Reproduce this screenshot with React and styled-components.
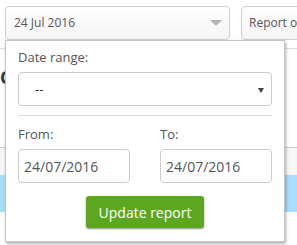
import React from "react";
import styled, { createGlobalStyle } from "styled-components";

const GlobalStyle = createGlobalStyle`
  html, body { margin: 0; padding: 0; background: #fff; }
  body { font-family: "Open Sans", "Liberation Sans", sans-serif; }
  * { box-sizing: border-box; }
`;

const Page = styled.div`
  position: relative;
  width: 297px;
  height: 245px;
  overflow: hidden;
  background: #fff;
`;

const Toolbar = styled.div`
  display: flex;
  gap: 11px;
  height: 49px;
  padding: 6px 0 0 5px;
  border-bottom: 1px solid #dcdcdc;
  white-space: nowrap;
`;

const ToolButton = styled.div`
  position: relative;
  flex: none;
  width: ${(p) => p.$width}px;
  height: 34px;
  padding-left: ${(p) => p.$pad}px;
  display: flex;
  align-items: center;
  border: 1px solid #cfcfcf;
  border-radius: 4px;
  background: linear-gradient(#ffffff, #f4f4f4);
  color: #555;
  font-size: 12px;
  line-height: 16px;
`;

const GrayCaret = styled.span`
  position: absolute;
  right: 7px;
  top: 13px;
  width: 0;
  height: 0;
  border-left: 6px solid transparent;
  border-right: 6px solid transparent;
  border-top: 6px solid #b4b4b4;
`;

const Content = styled.div`
  padding-top: 16px;
`;

const Heading = styled.h2`
  margin: 0 0 58px;
  font-size: 18px;
  line-height: 24px;
  font-weight: 700;
  color: #333;
  white-space: nowrap;
`;

const Row = styled.div`
  height: ${(p) => p.$h}px;
  background: ${(p) => p.$bg};
  border-top: ${(p) => (p.$line ? "1px solid #d0d0d0" : "none")};
`;

const Popup = styled.div`
  position: absolute;
  left: 5px;
  top: 40px;
  width: 280px;
  padding: 7px 12px 13px;
  background: #fff;
  border: 1px solid #c4c4c4;
  box-shadow: 1px 2px 3px rgba(0, 0, 0, 0.3);
`;

const Label = styled.div`
  font-size: 13px;
  line-height: 18px;
  color: #555;
  margin-bottom: 6px;
`;

const SelectBox = styled.div`
  position: relative;
  height: 34px;
  padding-left: 16px;
  display: flex;
  align-items: center;
  border: 1px solid #cccccc;
  border-radius: 4px;
  font-size: 13px;
  color: #333;
`;

const DarkCaret = styled.span`
  position: absolute;
  right: 7px;
  top: 15px;
  width: 0;
  height: 0;
  border-left: 3px solid transparent;
  border-right: 3px solid transparent;
  border-top: 5px solid #444;
`;

const Divider = styled.hr`
  margin: 9px 0 9px;
  border: none;
  border-top: 1px solid #dedede;
`;

const Fields = styled.div`
  display: grid;
  grid-template-columns: 112px 112px;
  column-gap: 30px;
`;

const Field = styled.div`
  display: flex;
  flex-direction: column;
`;

const DateInput = styled.div`
  height: 34px;
  padding-left: 5px;
  display: flex;
  align-items: center;
  border: 1px solid #cccccc;
  border-radius: 4px;
  font-size: 14px;
  color: #555;
`;

const Actions = styled.div`
  display: flex;
  justify-content: center;
  margin-top: 13px;
`;

const UpdateButton = styled.button`
  height: 32px;
  padding: 0 13px;
  border: none;
  border-radius: 3px;
  background: #5ca71f;
  color: #fff;
  font-family: "Open Sans", "Liberation Sans", sans-serif;
  font-size: 14px;
  box-shadow: 0 1px 2px rgba(0, 0, 0, 0.45);
`;

export default function App() {
  return (
    <>
      <GlobalStyle />
      <Page>
        <Toolbar>
          <ToolButton $width={225} $pad={8}>
            24 Jul 2016
            <GrayCaret />
          </ToolButton>
          <ToolButton $width={110} $pad={7}>
            Report options
          </ToolButton>
        </Toolbar>
        <Content>
          <Heading>Completed orders</Heading>
          <Row $h={28} $bg="#f6f6f6" $line />
          <Row $h={37} $bg="#a8defa" />
        </Content>
        <Popup>
          <Label>Date range:</Label>
          <SelectBox>
            --
            <DarkCaret />
          </SelectBox>
          <Divider />
          <Fields>
            <Field>
              <Label>From:</Label>
              <DateInput>24/07/2016</DateInput>
            </Field>
            <Field>
              <Label>To:</Label>
              <DateInput>24/07/2016</DateInput>
            </Field>
          </Fields>
          <Actions>
            <UpdateButton>Update report</UpdateButton>
          </Actions>
        </Popup>
      </Page>
    </>
  );
}
